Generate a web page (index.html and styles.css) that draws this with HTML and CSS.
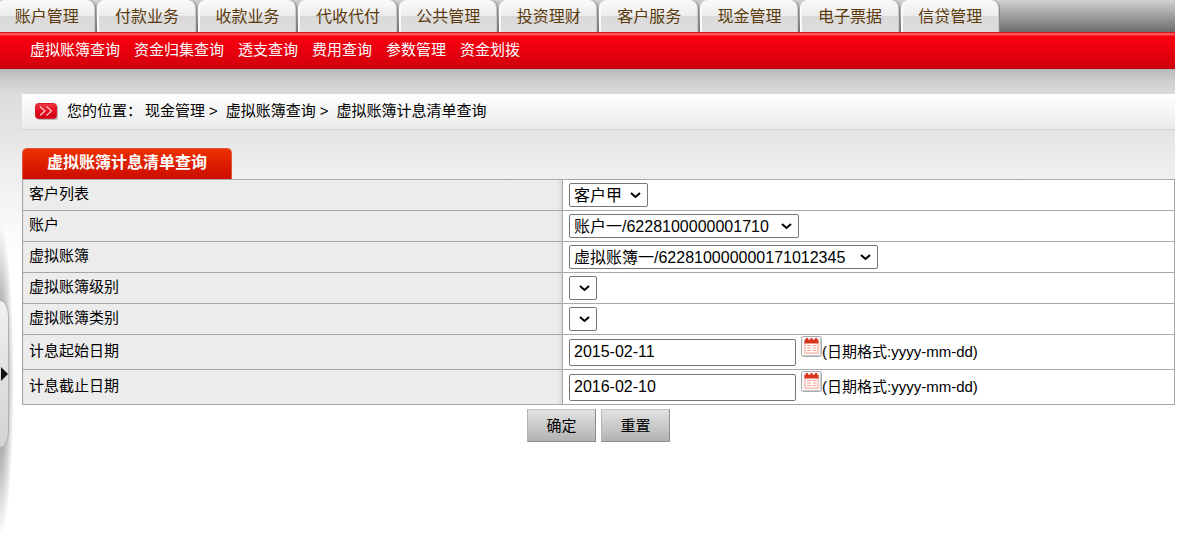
FILE: index.html
```html
<!DOCTYPE html>
<html lang="zh-CN">
<head>
<meta charset="utf-8">
<title>虚拟账簿计息清单查询</title>
<link rel="stylesheet" href="styles.css">
</head>
<body>
<div class="page">
  <header class="topbar">
    <nav class="tabs">
      <a class="tab" href="#">账户管理</a>
      <a class="tab" href="#">付款业务</a>
      <a class="tab" href="#">收款业务</a>
      <a class="tab" href="#">代收代付</a>
      <a class="tab" href="#">公共管理</a>
      <a class="tab" href="#">投资理财</a>
      <a class="tab" href="#">客户服务</a>
      <a class="tab" href="#">现金管理</a>
      <a class="tab" href="#">电子票据</a>
      <a class="tab" href="#">信贷管理</a>
    </nav>
  </header>
  <nav class="subnav">
    <a href="#">虚拟账簿查询</a>
    <a href="#">资金归集查询</a>
    <a href="#">透支查询</a>
    <a href="#">费用查询</a>
    <a href="#">参数管理</a>
    <a href="#">资金划拨</a>
  </nav>
  <main class="content">
    <div class="crumbs">
      <svg class="crumb-icon" width="24" height="18" viewBox="0 0 24 18" aria-hidden="true">
        <defs>
          <linearGradient id="crumbRed" x1="0" y1="0" x2="0" y2="1">
            <stop offset="0" stop-color="#f23a44"/>
            <stop offset="0.5" stop-color="#e4081c"/>
            <stop offset="1" stop-color="#cc0018"/>
          </linearGradient>
        </defs>
        <rect x="2" y="3" width="21" height="15" rx="3" fill="#b9b9b9"/>
        <rect x="0.5" y="1.5" width="21" height="15" rx="3" fill="url(#crumbRed)" stroke="#d5202c"/>
        <path d="M5 4.500l5 4.500-5 4.500M11.500 4.500l5 4.500-5 4.500" fill="none" stroke="#ffc4c4" stroke-width="1.300"/>
      </svg>
      <span class="crumb-label">您的位置：</span>
      <span>现金管理</span><span class="sep">&gt;</span>
      <span>虚拟账簿查询</span><span class="sep">&gt;</span>
      <span>虚拟账簿计息清单查询</span>
    </div>
    <h1 class="title">虚拟账簿计息清单查询</h1>
    <form class="query">
      <table class="fields">
        <tr>
          <th><label for="customer">客户列表</label></th>
          <td><select id="customer"><option>客户甲</option></select></td>
        </tr>
        <tr>
          <th><label for="account">账户</label></th>
          <td><select id="account" class="medium"><option>账户一/6228100000001710</option></select></td>
        </tr>
        <tr>
          <th><label for="book">虚拟账簿</label></th>
          <td><select id="book" class="wide"><option>虚拟账簿一/622810000000171012345</option></select></td>
        </tr>
        <tr>
          <th><label for="level">虚拟账簿级别</label></th>
          <td><select id="level" class="empty"></select></td>
        </tr>
        <tr>
          <th><label for="kind">虚拟账簿类别</label></th>
          <td><select id="kind" class="empty"></select></td>
        </tr>
        <tr class="date-row">
          <th><label for="start">计息起始日期</label></th>
          <td>
            <div class="date">
              <input id="start" type="text" value="2015-02-11">
              <button class="cal" type="button" aria-label="选择起始日期">
                <svg width="21" height="21" viewBox="0 0 21 21">
                  <rect x="0.5" y="0.500" width="20" height="20" rx="2" fill="#f7f7f7" stroke="#a8a8a8"/>
                  <path d="M1.500 19.500h18v-18" fill="none" stroke="#cfcfcf"/>
                  <rect x="4" y="6" width="13" height="11" fill="#fff" stroke="#f2a08e"/>
                  <path d="M3.500 3.500h14v4h-14z" fill="#d9341c"/>
                  <path d="M6 2v2M10.500 2v2M15 2v2" stroke="#d9341c" stroke-width="2"/>
                  <path d="M6 9.500h4M11.500 9.500h4M6 12h4M11.500 12h4M6 14.500h4M11.500 14.500h4" stroke="#f0a090"/>
                </svg>
              </button>
              <span class="hint">(日期格式:yyyy-mm-dd)</span>
            </div>
          </td>
        </tr>
        <tr class="date-row">
          <th><label for="end">计息截止日期</label></th>
          <td>
            <div class="date">
              <input id="end" type="text" value="2016-02-10">
              <button class="cal" type="button" aria-label="选择截止日期">
                <svg width="21" height="21" viewBox="0 0 21 21">
                  <rect x="0.5" y="0.500" width="20" height="20" rx="2" fill="#f7f7f7" stroke="#a8a8a8"/>
                  <path d="M1.500 19.500h18v-18" fill="none" stroke="#cfcfcf"/>
                  <rect x="4" y="6" width="13" height="11" fill="#fff" stroke="#f2a08e"/>
                  <path d="M3.500 3.500h14v4h-14z" fill="#d9341c"/>
                  <path d="M6 2v2M10.500 2v2M15 2v2" stroke="#d9341c" stroke-width="2"/>
                  <path d="M6 9.500h4M11.500 9.500h4M6 12h4M11.500 12h4M6 14.500h4M11.500 14.500h4" stroke="#f0a090"/>
                </svg>
              </button>
              <span class="hint">(日期格式:yyyy-mm-dd)</span>
            </div>
          </td>
        </tr>
      </table>
      <div class="actions">
        <button class="btn" type="submit">确定</button>
        <button class="btn" type="reset">重置</button>
      </div>
    </form>
  </main>
</div>
<div class="drawer-shadow"></div>
<button class="drawer" type="button" aria-label="展开菜单">
  <svg width="7" height="14" viewBox="0 0 7 14"><path d="M0 0l7 7-7 7z" fill="#111"/></svg>
</button>
</body>
</html>
```

FILE: styles.css
```css
* {
  box-sizing: border-box;
}

body {
  margin: 0;
  background: #fff;
  color: #000;
  font-family: "Liberation Sans", "Noto Sans CJK SC", sans-serif;
  font-size: 15px;
  line-height: 20px;
}

a {
  color: inherit;
  text-decoration: none;
}

.page {
  margin-right: 2px;
}

.topbar {
  height: 32px;
  overflow: hidden;
  background: linear-gradient(#d2d2d2, #6c6c6c);
}

.tabs {
  display: flex;
  width: 1004px;
  height: 32px;
  margin-left: -3px;
}

.tab {
  flex: 1;
  height: 32px;
  border: 1px solid #fafafa;
  border-width: 0 1px 0 2px;
  border-right-color: #c8c8c8;
  border-radius: 8px 8px 0 0;
  margin-right: 2px;
  background: linear-gradient(#fafafa, #ececec 50%, #d9d9d9 50%, #dedede);
  box-shadow: 1px 0 1px #888;
  color: #5c3a0c;
  font-size: 16px;
  line-height: 34px;
  text-align: center;
}

.subnav {
  display: flex;
  gap: 14px;
  height: 37px;
  padding-left: 30px;
  border-top: 1px solid #d4121c;
  border-bottom: 1px solid #b80010;
  background: linear-gradient(#ff5054 2px, #fb0010 3px, #d2000c);
  color: #fff;
  line-height: 34px;
}

.content {
  padding: 25px 0 0 22px;
  background: linear-gradient(#b7baba, #cecece 12px, #dcdcdc 25px, #e4e4e4 60px, #f0f0f0 110px, #fff 190px);
}

.crumbs {
  display: flex;
  align-items: center;
  height: 36px;
  padding: 0 0 2px 13px;
  border-bottom: 1px solid #d2d2d2;
  background: linear-gradient(#fff, #ebebeb);
}

.crumb-icon {
  margin-right: 8px;
}

.crumb-label {
  margin-right: 3px;
}

.sep {
  margin: 0 8px 0 4px;
}

.title {
  width: 210px;
  height: 31px;
  margin: 18px 0 0;
  border: 1px solid #e2563c;
  border-bottom: 0;
  border-radius: 5px 5px 0 0;
  background: linear-gradient(#ee3000, #cc0c00);
  color: #fff;
  font-size: 16px;
  font-weight: bold;
  line-height: 28px;
  text-align: center;
}

.fields {
  width: 100%;
  border-collapse: collapse;
  table-layout: fixed;
  background: #fff;
}

.fields th,
.fields td {
  height: 31px;
  padding: 0 6px;
  border: 1px solid #a8a8a8;
}

.fields th {
  width: 540px;
  padding-bottom: 2px;
  background: linear-gradient(to right, #ececec calc(100% - 5px), #d8d8d8);
  font-weight: normal;
  text-align: left;
}

.fields .date-row th,
.fields .date-row td {
  height: 35px;
}

select,
input {
  border: 1px solid #767676;
  border-radius: 2px;
  background: #fff;
  color: #000;
  font-family: inherit;
  font-size: 16px;
}

select {
  display: block;
  height: 24px;
  padding: 0 24px 0 4px;
  appearance: none;
  background: #fff url("data:image/svg+xml,%3Csvg xmlns='http://www.w3.org/2000/svg' width='11' height='7'%3E%3Cpath d='M1 1l4.500 4 4.500-4' fill='none' stroke='black' stroke-width='2'/%3E%3C/svg%3E") no-repeat right 6px center;
}

.empty {
  width: 28px;
  padding: 0;
}

.medium {
  width: 230px;
}

.wide {
  width: 309px;
}

input {
  width: 227px;
  height: 27px;
  padding: 0 4px;
}

.date {
  display: flex;
  align-items: center;
}

.cal {
  align-self: flex-start;
  width: 21px;
  height: 21px;
  margin: -3px 0 0 5px;
  padding: 0;
  border: 0;
  background: none;
}

.cal svg {
  display: block;
}

.actions {
  display: flex;
  justify-content: center;
  gap: 5px;
  padding-top: 4px;
  background: #fff;
}

.btn {
  width: 69px;
  height: 33px;
  padding: 0 0 2px;
  border: 1px solid #8c8c8c;
  border-top-color: #c4c4c4;
  border-left-color: #b4b4b4;
  background: linear-gradient(#e2e2e2, #b2b2b2);
  color: #000;
  font-family: inherit;
  font-size: 15px;
}

.drawer-shadow {
  position: absolute;
  top: 224px;
  left: 0;
  width: 14px;
  height: 312px;
  background: radial-gradient(ellipse 14px 156px at 0 50%, #8c8c8c, #b4b4b4 50%, rgba(255, 255, 255, 0));
}

.drawer {
  position: absolute;
  top: 300px;
  left: 0;
  display: flex;
  align-items: center;
  width: 9px;
  height: 148px;
  padding: 0 0 0 1px;
  border: 1px solid #b0b0b0;
  border-left: 0;
  border-radius: 0 9px 9px 0 / 0 16px 16px 0;
  background: linear-gradient(#f0f0f0, #d2d2d2);
}
```
